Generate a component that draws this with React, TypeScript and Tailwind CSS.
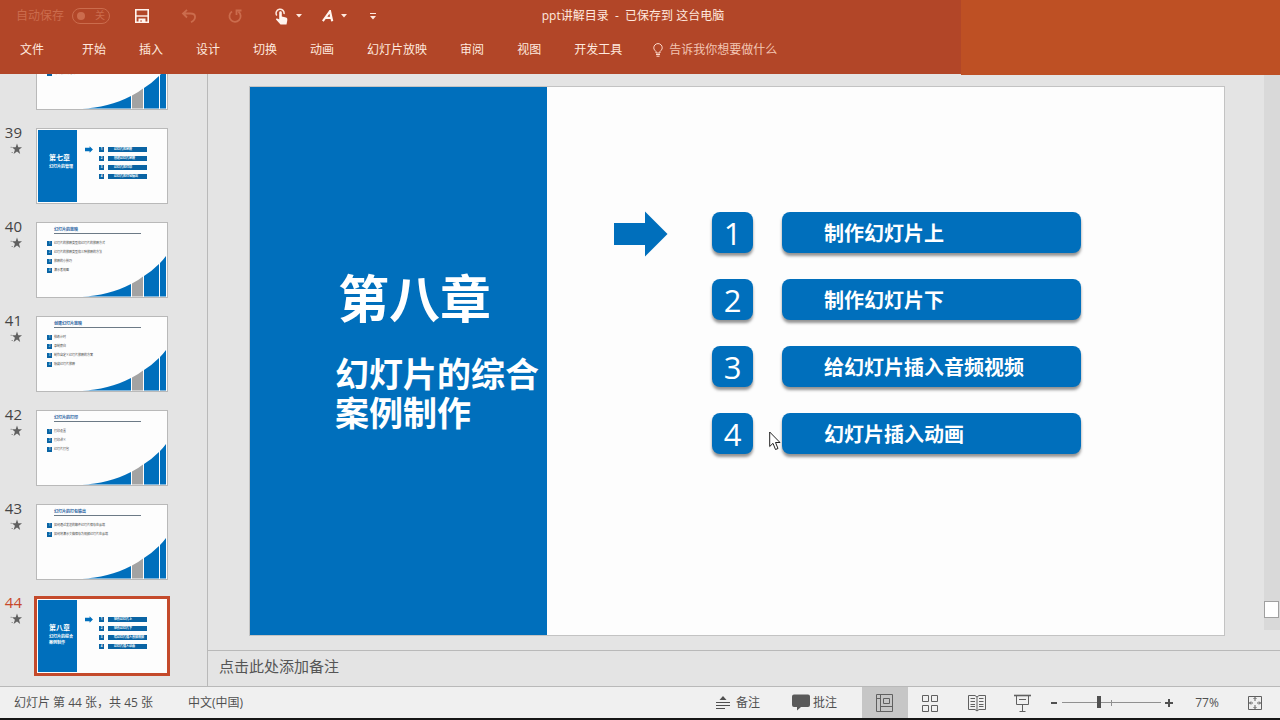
import React from "react";

type BulletSlide = { kind: "bullets"; title: string; items: string[] };
type ChapterSlide = { kind: "chapter"; title: string; subtitle: string[]; items: string[] };
type Slide = { no: number } & (BulletSlide | ChapterSlide);

const slides: Slide[] = [
  { no: 38, kind: "bullets", title: "幻灯片的动画", items: ["动画的添加", "动画的设置", "动画效果的选项"] },
  { no: 39, kind: "chapter", title: "第七章", subtitle: ["幻灯片的管理"], items: ["幻灯片的放映", "创建幻灯片放映", "幻灯片的打印", "幻灯片的打包输出"] },
  { no: 40, kind: "bullets", title: "幻灯片的放映", items: ["幻灯片的放映类型和幻灯片的放映方式", "幻灯片的放映类型和三种放映的方法", "放映的小技巧", "演示者视图"] },
  { no: 41, kind: "bullets", title: "创建幻灯片放映", items: ["排练计时", "录制旁白", "制作自定义幻灯片放映的方案", "隐藏幻灯片放映"] },
  { no: 42, kind: "bullets", title: "幻灯片的打印", items: ["打印设置", "打印讲义", "幻灯片打包"] },
  { no: 43, kind: "bullets", title: "幻灯片的打包输出", items: ["如何通过发送的邮件幻灯片保存在云端", "如何将演示文稿保存为视频幻灯片在云端"] },
  { no: 44, kind: "chapter", title: "第八章", subtitle: ["幻灯片的综合", "案例制作"], items: ["制作幻灯片上", "制作幻灯片下", "给幻灯片插入音频视频", "幻灯片插入动画"] },
];

const tabs = ["开始", "插入", "设计", "切换", "动画", "幻灯片放映", "审阅", "视图", "开发工具"];

function ArrowShape({ className }: { className: string }) {
  return (
    <svg viewBox="0 0 54 46" className={className} aria-hidden="true">
      <path d="M0 12H31V0.5L53.5 23L31 45.5V34H0Z" fill="#006fbc" />
    </svg>
  );
}

function Curve() {
  return (
    <svg viewBox="0 0 130 74" className="absolute inset-0 h-full w-full" aria-hidden="true">
      <path d="M45 73.500C62 73 79 69 94 61V73.500Z" fill="#006fbc" />
      <path d="M95 60.500Q101 57.500 106 53.500V73.500H95Z" fill="#a3a3a3" />
      <path d="M107 53Q115 48 122 41V73.500H107Z" fill="#006fbc" />
      <path d="M123 40Q126 37 129 33V73.500H123Z" fill="#006fbc" />
    </svg>
  );
}

function BulletThumb({ title, items }: BulletSlide) {
  return (
    <span className="relative block h-full w-full text-left">
      <Curve />
      <span className="relative block pl-[17px] pt-1">
        <span className="block w-[87px] border-b border-[#6c7a86] text-[4px] font-bold leading-[6px] text-[#1f5f9e]">{title}</span>
      </span>
      <span className="relative mt-[7px] flex flex-col gap-1 pl-2.5">
        {items.map((t, i) => (
          <span key={t} className="flex h-[5px] items-center gap-0.5 text-[3px] leading-[5px] text-[#444]">
            <span className="block h-[5px] w-[5px] bg-[#0a64a4] text-center text-white">{i + 1}</span>
            <span className="whitespace-nowrap">{t}</span>
          </span>
        ))}
      </span>
    </span>
  );
}

function ChapterThumb({ title, subtitle, items }: ChapterSlide) {
  return (
    <span className="flex h-full w-full p-px text-left font-bold text-white">
      <span className="block w-[39px] bg-[#006fbc] pl-[11px] pt-6">
        <span className="block whitespace-nowrap text-[7px] leading-[8px]">{title}</span>
        <span className="block whitespace-nowrap pt-0.5 text-[4px] leading-[6px]">
          {subtitle.map((s) => (
            <span key={s} className="block">{s}</span>
          ))}
        </span>
      </span>
      <ArrowShape className="ml-2 mt-4 h-[7px] w-2" />
      <span className="ml-1.5 mt-[17px] flex flex-col gap-1">
        {items.map((t, i) => (
          <span key={t} className="flex gap-1 text-[3px] leading-[5px]">
            <span className="block h-[5px] w-[5px] bg-[#0a64a4] text-center">{i + 1}</span>
            <span className="block h-[5px] w-[39px] whitespace-nowrap bg-[#0a64a4] pl-1.5">{t}</span>
          </span>
        ))}
      </span>
    </span>
  );
}

function Thumb({ slide }: { slide: Slide }) {
  const active = slide.no === 44;
  return (
    <li className="flex h-[76px] shrink-0">
      <div className="-mt-[3px] flex w-9 flex-col items-end pr-3.5">
        <span className={active ? "text-[15px] leading-none text-[#c8482a]" : "text-[15px] leading-none text-[#444]"}>{slide.no}</span>
        <svg viewBox="0 0 12 12" className="mt-[3px] h-3 w-3" aria-hidden="true">
          <path d="M7 0.500L8.300 4.300H12L9 6.800L10.200 11L7 8.500L3.600 11L4.900 6.800L2 4.300H5.700Z" fill="#606060" />
          <path d="M0.500 4.300H2M1.500 9.500H3" stroke="#8a8a8a" strokeWidth="0.8" />
        </svg>
      </div>
      <button
        type="button"
        aria-label={`幻灯片 ${slide.no}`}
        className={
          active
            ? "block h-[76px] w-[132px] border border-[#fdfdfd] bg-[#fdfdfd] outline-3 outline-offset-[-1px] outline-[#c44a2b]"
            : "block h-[76px] w-[132px] border border-[#b9b9b9] bg-[#fdfdfd]"
        }
      >
        {slide.kind === "chapter" ? <ChapterThumb {...slide} /> : <BulletThumb {...slide} />}
      </button>
    </li>
  );
}

function Caret() {
  return (
    <svg viewBox="0 0 6 4" className="h-1 w-1.5" aria-hidden="true">
      <path d="M0 0H6L3 3.500Z" fill="#ffe9df" />
    </svg>
  );
}

function Header() {
  return (
    <header className="relative h-[74px] shrink-0 bg-[#b24628] text-xs text-[#ffe9df]">
      <div className="absolute right-0 top-0 h-[75px] w-[319px] bg-[#be5024]" />
      <div className="relative grid h-8 grid-cols-[1fr_auto_1fr] items-center pr-3.5">
        <div className="flex items-center pl-4">
          <label htmlFor="autosave" className="text-[#cb6c4d]">自动保存</label>
          <button id="autosave" type="button" role="switch" aria-checked="false" className="ml-2 flex h-4 w-[38px] items-center justify-between rounded-full border border-[#cb6c4d] pl-1 pr-1 text-[10px] text-[#cb6c4d]">
            <span className="h-2 w-2 rounded-full bg-[#cb6c4d]" />
            关
          </button>
          <button type="button" aria-label="保存" className="ml-[25px]">
            <svg viewBox="0 0 14 14" className="h-3.5 w-3.5" aria-hidden="true">
              <path d="M0.800 0.800H13.200V13.200H0.800Z" fill="none" stroke="#fff4ee" strokeWidth="1.600" />
              <path d="M1 7H13" stroke="#fff4ee" strokeWidth="1.400" />
              <path d="M3.500 9.500H10.500V13.500H7V11.500H5.200V13.500H3.500Z" fill="#fff4ee" />
            </svg>
          </button>
          <button type="button" aria-label="撤消" className="ml-8">
            <svg viewBox="0 0 16 14" className="h-3.5 w-4" fill="none" stroke="#cb6c4d" strokeWidth="1.800" aria-hidden="true">
              <path d="M6 0.800L2 4.500L6 8.500M2 4.500H9.500C15.500 4.500 15.500 10.500 10 13.200" />
            </svg>
          </button>
          <button type="button" aria-label="重复" className="ml-[31px]">
            <svg viewBox="0 0 14 14" className="h-3.5 w-3.5" fill="none" stroke="#cb6c4d" strokeWidth="1.800" aria-hidden="true">
              <path d="M4 2.500A5.600 5.600 0 1 0 10.500 2.800M8.500 6V1.500H13.500" />
            </svg>
          </button>
          <button type="button" aria-label="触摸/鼠标模式" className="ml-[33px] flex items-center gap-[7px]">
            <svg viewBox="0 0 14 17" className="h-[17px] w-3.5" aria-hidden="true">
              <path d="M1.800 7.500A4 4 0 1 1 9 6" fill="none" stroke="#ffe9df" strokeWidth="1.500" />
              <path d="M4.200 4.500C4.200 2.800 6.800 2.800 6.800 4.500V8.500L11 9.500C12.500 10 12.500 11 12.200 13L11.500 16.500H5.500L1 11.500C0.800 10 2.500 10 4.200 11.500Z" fill="#fff4ee" />
            </svg>
            <Caret />
          </button>
          <button type="button" aria-label="字体颜色" className="ml-5 flex items-center gap-[7px]">
            <svg viewBox="0 0 12 12" className="h-3 w-3" aria-hidden="true">
              <path d="M0.800 11.200L8 1.200L10.200 11.200M3.800 7.800H9.500" fill="none" stroke="#fff4ee" strokeWidth="2.200" />
            </svg>
            <Caret />
          </button>
          <button type="button" aria-label="自定义快速访问工具栏" className="ml-[23px] flex flex-col items-center gap-0.5">
            <span className="block h-px w-1.5 bg-[#ffe9df]" />
            <Caret />
          </button>
        </div>
        <h1 className="whitespace-pre leading-none">ppt讲解目录  -  已保存到 这台电脑</h1>
      </div>
      <nav className="relative flex h-9 items-center gap-[33px] pl-5">
        <button type="button" className="mr-[5px]">文件</button>
        {tabs.map((t) => (
          <button key={t} type="button">{t}</button>
        ))}
        <button type="button" className="-ml-0.5 flex items-center gap-1.5 text-[#f3c5b3]">
          <svg viewBox="0 0 10 14" className="h-3.5 w-2.5" fill="none" stroke="#ffdccd" aria-hidden="true">
            <path d="M3 10V8.500C2 7.500 0.800 6.500 0.800 4.800A4.200 4.200 0 0 1 9.200 4.800C9.200 6.500 8 7.500 7 8.500V10ZM3 11.500H7M3.500 13.200H6.500" />
          </svg>
          告诉我你想要做什么
        </button>
      </nav>
    </header>
  );
}

function Stage() {
  const s = slides[slides.length - 1] as ChapterSlide;
  return (
    <div className="flex min-h-0 flex-1">
      <div className="flex flex-1 pb-3.5 pl-[41px] pr-[39px] pt-3">
        <section className="relative flex flex-1 border border-[#c3c3c3] bg-[#fdfdfd]">
          <div className="w-[297px] shrink-0 bg-[#006fbc] text-white">
            <h2 className="pl-[88px] pt-[179px] text-[51px] font-bold leading-[64px]">{s.title}</h2>
            <p className="whitespace-nowrap pl-[85px] pt-[25px] text-[34px] font-bold leading-[39px]">
              {s.subtitle[0]}
              <br />
              {s.subtitle[1]}
            </p>
          </div>
          <ArrowShape className="ml-[67px] mt-[124px] h-[46px] w-[54px]" />
          <ol className="ml-11 mt-[125px] flex flex-col gap-[26px]">
            {s.items.map((t, i) => (
              <li key={t} className="flex gap-[29px] text-white">
                <span className="flex h-[41px] w-[41px] items-center justify-center rounded-lg bg-[#006fbc] pt-0.5 text-[31px] leading-none shadow-[0_3px_3px_rgba(60,60,60,0.55)]">{i + 1}</span>
                <span className="flex h-[41px] w-[299px] items-center rounded-lg bg-[#006fbc] pl-[42px] pt-0.5 text-xl font-bold leading-none shadow-[0_3px_3px_rgba(60,60,60,0.55)]">{t}</span>
              </li>
            ))}
          </ol>
          <svg viewBox="0 0 12 20" className="absolute left-[519px] top-[344px] h-5 w-3" aria-hidden="true">
            <path d="M0.700 1V15.500L4 12.300L6.500 18.500L9 17.500L6.500 11.500H11Z" fill="#fff" stroke="#222" />
          </svg>
        </section>
      </div>
      <div className="flex w-4 flex-col bg-[#d9d9d9] pt-[527px]">
        <span className="block h-[17px] w-[15px] border border-[#a0a0a0] bg-white" />
        <span className="mt-3 flex-1 bg-[#e4e4e4]" />
      </div>
    </div>
  );
}

function StatusBar() {
  return (
    <footer className="flex h-[34px] shrink-0 items-center border-b-2 border-t border-b-[#161616] border-t-[#b9b9b9] bg-[#f0f0f0] text-xs text-[#505050]">
      <span className="w-[188px] whitespace-nowrap pl-3.5">幻灯片 第 44 张，共 45 张</span>
      <button type="button">中文(中国)</button>
      <span className="flex-1" />
      <button type="button" className="flex items-center gap-1.5">
        <svg viewBox="0 0 14 14" className="h-3.5 w-3.5" aria-hidden="true">
          <path d="M7 0L10.500 4H3.500Z" fill="#505050" />
          <path d="M0 6.500H14M0 9.500H14M0 12.500H9" stroke="#505050" />
        </svg>
        备注
      </button>
      <button type="button" className="ml-8 flex items-center gap-[3px]">
        <svg viewBox="0 0 18 17" className="h-[17px] w-[18px]" aria-hidden="true">
          <path d="M2 0.500H16Q18 0.500 18 2.500V11Q18 13 16 13H9L5 16.500V13H2Q0 13 0 11V2.500Q0 0.500 2 0.500Z" fill="#5a5a5a" />
        </svg>
        批注
      </button>
      <div className="ml-[25px] flex h-full text-[#606060]">
        <button type="button" aria-label="普通视图" className="flex w-[46px] items-center justify-center bg-[#c6c6c6]">
          <svg viewBox="0 0 18 18" className="h-[18px] w-[18px]" fill="none" stroke="currentColor" aria-hidden="true">
            <path d="M0.500 0.500H16.500V17.500H0.500ZM4.500 0.500V17.500M7.500 4.500H13.500V9.500H7.500ZM4.500 12.500H16.500M0.500 4.500H4.500" />
          </svg>
        </button>
        <button type="button" aria-label="幻灯片浏览" className="flex w-[46px] items-center justify-center">
          <svg viewBox="0 0 18 18" className="h-[18px] w-[18px]" fill="none" stroke="currentColor" aria-hidden="true">
            <path d="M0.500 1.500H6.500V7.500H0.500ZM9.500 1.500H15.500V7.500H9.500ZM0.500 11.500H6.500V17.500H0.500ZM9.500 11.500H15.500V17.500H9.500Z" />
          </svg>
        </button>
        <button type="button" aria-label="阅读视图" className="flex w-[46px] items-center justify-center">
          <svg viewBox="0 0 18 18" className="h-[18px] w-[18px]" fill="none" stroke="currentColor" aria-hidden="true">
            <path d="M0.500 1.500H7L9 3L11 1.500H17.500V15.500H11L9 17L7 15.500H0.500ZM9 3V17M2.500 4.500H7M2.500 7.500H7M2.500 10.500H7M2.500 12.500H7M11 4.500H15.500M11 7.500H15.500M11 10.500H15.500M11 12.500H15.500" />
          </svg>
        </button>
        <button type="button" aria-label="幻灯片放映" className="flex w-[46px] items-center justify-center">
          <svg viewBox="0 0 18 18" className="h-[18px] w-[18px]" fill="none" stroke="currentColor" aria-hidden="true">
            <path d="M0 1.500H17" strokeWidth="1.600" />
            <path d="M2.500 1.500V10.500H14.500V1.500M5 5.500H12M8.500 10.500V17M5.500 17.500H11.500" />
          </svg>
        </button>
      </div>
      <button type="button" aria-label="缩小" className="ml-0.5 flex h-3 w-3 items-center justify-center">
        <span className="block h-0.5 w-1.5 bg-[#505050]" />
      </button>
      <span className="relative ml-0.5 flex items-center">
        <span className="absolute left-[49px] h-1.5 w-px bg-[#909090]" />
        <input
          type="range"
          aria-label="显示比例"
          min={0}
          max={100}
          defaultValue={37}
          className="relative h-3 w-[99px] appearance-none bg-transparent [&::-webkit-slider-runnable-track]:h-px [&::-webkit-slider-runnable-track]:bg-[#909090] [&::-webkit-slider-thumb]:-mt-1.5 [&::-webkit-slider-thumb]:h-3 [&::-webkit-slider-thumb]:w-1 [&::-webkit-slider-thumb]:appearance-none [&::-webkit-slider-thumb]:bg-[#505050]"
        />
      </span>
      <button type="button" aria-label="放大" className="ml-0.5 flex h-3 w-3 items-center justify-center">
        <svg viewBox="0 0 8 8" className="h-2 w-2" aria-hidden="true">
          <path d="M0 4H8M4 0V8" stroke="#505050" strokeWidth="2" />
        </svg>
      </button>
      <button type="button" className="ml-[18px] w-7">77%</button>
      <button type="button" aria-label="使幻灯片适应当前窗口" className="ml-[27px] mr-[18px]">
        <svg viewBox="0 0 14 14" className="h-3.5 w-3.5" fill="none" stroke="#606060" aria-hidden="true">
          <path d="M0.500 0.500H13.500V13.500H0.500ZM7 1.500V5M7 9V12.500M1.500 7H5M9 7H12.500M5.500 3L7 1.500L8.500 3M5.500 11L7 12.500L8.500 11M3 5.500L1.500 7L3 8.500M11 5.500L12.500 7L11 8.500" />
        </svg>
      </button>
    </footer>
  );
}

export default function App() {
  return (
    <div className="flex h-screen min-h-[640px] flex-col overflow-hidden bg-[#e4e4e4] font-['Open_Sans','Noto_Sans_CJK_SC',sans-serif]">
      <Header />
      <main className="flex min-h-0 flex-1">
        <aside className="flex w-[208px] shrink-0 flex-col justify-end overflow-hidden border-r border-[#b9b9b9] pb-3">
          <ul className="flex flex-col gap-[18px]">
            {slides.map((s) => (
              <Thumb key={s.no} slide={s} />
            ))}
          </ul>
        </aside>
        <div className="flex min-w-0 flex-1 flex-col">
          <Stage />
          <textarea
            aria-label="备注"
            placeholder="点击此处添加备注"
            className="block h-9 shrink-0 resize-none border-t border-[#b9b9b9] px-[11px] pt-[3px] text-[15px] leading-6 placeholder:text-[#555]"
          />
        </div>
      </main>
      <StatusBar />
    </div>
  );
}
